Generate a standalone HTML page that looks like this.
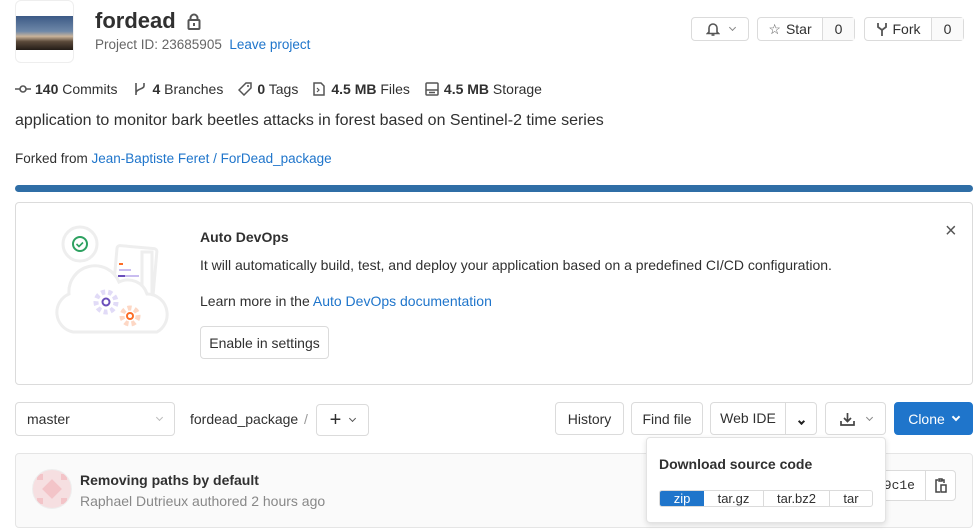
<!DOCTYPE html>
<html><head><meta charset="utf-8"><style>
*{box-sizing:border-box;margin:0;padding:0}
body{width:978px;height:532px;overflow:hidden;background:#fff;font-family:"Liberation Sans",sans-serif;color:#303030;font-size:14px;position:relative}
.a{position:absolute}
.btn{position:absolute;border:1px solid #dbdbdb;border-radius:4px;background:#fff;font-size:14px;color:#303030;display:flex;align-items:center;justify-content:center}
.gray{color:#666}
a,.link{color:#1f75cb;text-decoration:none}
.chev{display:inline-block;width:6px;height:6px;border-right:1.6px solid #555;border-bottom:1.6px solid #555;transform:rotate(45deg);margin-top:-3px}
</style></head><body>
<div class="a" style="left:15px;top:0;width:59px;height:63px;border:1px solid #eee;border-radius:6px;overflow:hidden;background:#fff">
 <div class="a" style="left:0;top:15px;width:58px;height:34px;background:linear-gradient(180deg,#3c5a86 0%,#6e88a8 45%,#c9b39a 60%,#5b4a3a 75%,#231c17 100%)"></div>
</div>
<div class="a" style="left:95px;top:8px;font-size:22px;font-weight:bold;color:#303030">fordead</div>
<svg class="a" style="left:187px;top:13px" width="14" height="17" viewBox="0 0 14 17"><path d="M3.5 7V5a3.5 3.5 0 0 1 7 0v2" fill="none" stroke="#555" stroke-width="2"/><rect x="1.5" y="7" width="11" height="9" rx="1" fill="none" stroke="#555" stroke-width="2"/><rect x="6" y="10" width="2" height="3" fill="#555"/></svg>
<div class="a gray" style="left:95px;top:37px;font-size:13.5px">Project ID: 23685905 &nbsp;<span class="link">Leave project</span></div>

<div class="btn" style="left:691px;top:17px;width:58px;height:24px;gap:10px"><svg width="14" height="14" viewBox="0 0 14 14"><path d="M3 10V6a4 4 0 0 1 8 0v4l1.5 1.5h-11z" fill="none" stroke="#555" stroke-width="1.6"/><path d="M5.5 13h3" stroke="#555" stroke-width="1.6"/></svg><span class="chev" style="width:5px;height:5px;border-color:#888"></span></div>
<div class="btn" style="left:757px;top:17px;width:98px;height:24px;justify-content:flex-start"><span style="width:65px;display:flex;align-items:center;justify-content:center;gap:5px;border-right:1px solid #dbdbdb;height:100%"><span style="color:#555;font-size:14px">☆</span>Star</span><span style="flex:1;text-align:center;background:#fafafa;height:100%;line-height:22px">0</span></div>
<div class="btn" style="left:864px;top:17px;width:100px;height:24px;justify-content:flex-start"><span style="width:67px;display:flex;align-items:center;justify-content:center;gap:5px;border-right:1px solid #dbdbdb;height:100%"><svg width="12" height="14" viewBox="0 0 12 14"><path d="M2 1v4l4 3 4-3V1M6 8v6" fill="none" stroke="#555" stroke-width="1.8"/></svg>Fork</span><span style="flex:1;text-align:center;background:#fafafa;height:100%;line-height:22px">0</span></div>

<div class="a" style="left:15px;top:81px;display:flex;align-items:center;font-size:14px;white-space:nowrap">
<svg width="16" height="10" viewBox="0 0 16 10"><circle cx="8" cy="5" r="3" fill="none" stroke="#555" stroke-width="1.6"/><path d="M0 5h5M11 5h5" stroke="#555" stroke-width="1.6"/></svg>
<span style="margin-left:4px"><b>140</b> Commits</span>
<svg style="margin-left:17px" width="12" height="14" viewBox="0 0 12 14"><path d="M2 1v12M10 1v3c0 3-8 3-8 7" fill="none" stroke="#555" stroke-width="1.6"/></svg>
<span style="margin-left:6px"><b>4</b> Branches</span>
<svg style="margin-left:15px" width="14" height="14" viewBox="0 0 14 14"><path d="M8 1h5v5l-7 7-5-5z" fill="none" stroke="#555" stroke-width="1.5"/><circle cx="10" cy="4" r="1" fill="#555"/></svg>
<span style="margin-left:5px"><b>0</b> Tags</span>
<svg style="margin-left:15px" width="12" height="14" viewBox="0 0 12 14"><path d="M1 1h7l3 3v9H1z" fill="none" stroke="#555" stroke-width="1.5"/><path d="M4 6l2 2-2 2" fill="none" stroke="#555" stroke-width="1.2"/></svg>
<span style="margin-left:6px"><b>4.5 MB</b> Files</span>
<svg style="margin-left:15px" width="14" height="14" viewBox="0 0 14 14"><rect x="1" y="1" width="12" height="12" rx="1" fill="none" stroke="#555" stroke-width="1.5"/><path d="M1 8h12M4 10.5h6" stroke="#555" stroke-width="1.5"/></svg>
<span style="margin-left:5px"><b>4.5 MB</b> Storage</span>
</div>
<div class="a" style="left:15px;top:112px;font-size:16px">application to monitor bark beetles attacks in forest based on Sentinel-2 time series</div>
<div class="a" style="left:15px;top:151px;font-size:13.5px">Forked from <span class="link">Jean-Baptiste Feret / ForDead_package</span></div>
<div class="a" style="left:15px;top:185px;width:958px;height:7px;border-radius:4px;background:#2f6ea6"></div>

<div class="a" style="left:15px;top:202px;width:958px;height:183px;border:1px solid #dbdbdb;border-radius:4px"></div>
<svg class="a" style="left:55px;top:222px" width="125" height="120" viewBox="0 0 125 120">
<circle cx="25" cy="22" r="17" fill="#fff" stroke="#eee" stroke-width="3"/>
<circle cx="25" cy="22" r="7" fill="none" stroke="#2da160" stroke-width="2"/><path d="M21.5 22l2.5 2.5 4-4" fill="none" stroke="#2da160" stroke-width="1.6"/>
<rect x="60" y="25" width="40" height="50" rx="3" fill="#fff" stroke="#eee" stroke-width="3" transform="rotate(5 80 50)"/>
<rect x="87" y="30" width="10" height="45" fill="none" stroke="#eee" stroke-width="3"/>
<path d="M64 42h4M66 59h8" stroke="#fc6d26" stroke-width="2"/><path d="M64 48h12M64 54h20" stroke="#c9bdf0" stroke-width="2"/><path d="M63 54h7" stroke="#6b4fbb" stroke-width="2"/>
<path d="M18 110a20 20 0 0 1-4-38 26 26 0 0 1 50-12 20 20 0 0 1 28 12 20 20 0 0 1 20 18 20 20 0 0 1-10 20z" fill="#fff" stroke="#eee" stroke-width="3"/>
<circle cx="51" cy="80" r="10" fill="none" stroke="#e1dbf7" stroke-width="5" stroke-dasharray="4 3"/><circle cx="51" cy="80" r="3.5" fill="none" stroke="#6b4fbb" stroke-width="2"/>
<circle cx="75" cy="94" r="8" fill="none" stroke="#fdd7c4" stroke-width="5" stroke-dasharray="4 3"/><circle cx="75" cy="94" r="3" fill="none" stroke="#fc6d26" stroke-width="2"/>
</svg>
<div class="a" style="left:200px;top:229px;font-weight:bold">Auto DevOps</div>
<div class="a" style="left:200px;top:257px">It will automatically build, test, and deploy your application based on a predefined CI/CD configuration.</div>
<div class="a" style="left:200px;top:293px">Learn more in the <span class="link">Auto DevOps documentation</span></div>
<div class="btn" style="left:200px;top:326px;width:129px;height:33px">Enable in settings</div>
<div class="a" style="left:945px;top:220px;font-size:20px;color:#555">×</div>

<div class="btn" style="left:15px;top:402px;width:160px;height:34px;justify-content:space-between;padding:0 12px 0 11px">master<span class="chev" style="border-color:#bbb;width:5px;height:5px"></span></div>
<div class="a" style="left:190px;top:411px">fordead_package</div>
<div class="a" style="left:304px;top:411px;color:#999">/</div>
<div class="btn" style="left:316px;top:404px;width:53px;height:32px;gap:9px"><span style="font-size:20px;line-height:1">+</span><span class="chev" style="width:5px;height:5px"></span></div>
<div class="btn" style="left:555px;top:402px;width:69px;height:33px">History</div>
<div class="btn" style="left:631px;top:402px;width:72px;height:33px">Find file</div>
<div class="btn" style="left:710px;top:402px;width:107px;height:33px;justify-content:flex-start"><span style="width:75px;text-align:center;border-right:1px solid #dbdbdb;line-height:31px">Web IDE</span><span style="flex:1;text-align:center"><span class="chev" style="border-color:#222;border-width:2px;width:5px;height:5px"></span></span></div>
<div class="btn" style="left:825px;top:402px;width:61px;height:33px;gap:12px"><svg width="15" height="14" viewBox="0 0 15 14"><path d="M7.5 1v8M4 6l3.5 3.5L11 6M1 9v4h13V9" fill="none" stroke="#444" stroke-width="1.7"/></svg><span class="chev" style="border-color:#888;width:5px;height:5px"></span></div>
<div class="btn" style="left:894px;top:402px;width:79px;height:33px;background:#1f75cb;border-color:#1f75cb;color:#fff;gap:8px">Clone<span class="chev" style="border-color:#fff;border-width:2px"></span></div>

<div class="a" style="left:15px;top:453px;width:958px;height:75px;background:#fafafa;border:1px solid #e5e5e5;border-radius:4px"></div>
<div class="a" style="left:32px;top:469px;width:40px;height:40px;border-radius:50%;background:#f6dfe1;border:1px solid #eee;overflow:hidden">
<div class="a" style="left:12px;top:12px;width:14px;height:14px;background:#f3c4c8;transform:rotate(45deg)"></div>
<div class="a" style="left:4px;top:4px;width:6px;height:6px;background:#f3c4c8"></div><div class="a" style="left:28px;top:4px;width:6px;height:6px;background:#f3c4c8"></div><div class="a" style="left:4px;top:28px;width:6px;height:6px;background:#f3c4c8"></div><div class="a" style="left:28px;top:28px;width:6px;height:6px;background:#f3c4c8"></div></div>
<div class="a" style="left:80px;top:472px;font-weight:bold">Removing paths by default</div>
<div class="a" style="left:80px;top:493px;color:#888">Raphael Dutrieux authored 2 hours ago</div>
<div class="a" style="left:870px;top:470px;width:56px;height:31px;border:1px solid #dbdbdb;border-radius:4px 0 0 4px;background:#fff;font-family:'Liberation Mono',monospace;font-size:13px;line-height:29px;text-align:right;padding-right:10px">9c1e</div>
<div class="btn" style="left:925px;top:470px;width:31px;height:31px;border-radius:0 4px 4px 0"><svg width="12" height="15" viewBox="0 0 12 15"><path d="M3 2H1v12h4M9 5V2H7M4 1h3v2H4z" fill="none" stroke="#444" stroke-width="1.5"/><rect x="6" y="7" width="5" height="7" fill="none" stroke="#444" stroke-width="1.5"/></svg></div>

<div class="a" style="left:646px;top:437px;width:240px;height:86px;background:#fff;border:1px solid #e3e3e3;border-radius:4px;box-shadow:0 2px 6px rgba(0,0,0,.12)">
<div class="a" style="left:12px;top:18px;font-size:14px;font-weight:600">Download source code</div>
<div class="a" style="left:12px;top:52px;width:214px;height:17px;border:1px solid #dbdbdb;border-radius:3px;display:flex;font-size:13px;overflow:hidden;line-height:15px">
<span style="width:44px;text-align:center;background:#1f75cb;color:#fff">zip</span>
<span style="width:60px;text-align:center;border-right:1px solid #dbdbdb">tar.gz</span>
<span style="width:66px;text-align:center;border-right:1px solid #dbdbdb">tar.bz2</span>
<span style="flex:1;text-align:center">tar</span></div>
</div>
</body></html>
